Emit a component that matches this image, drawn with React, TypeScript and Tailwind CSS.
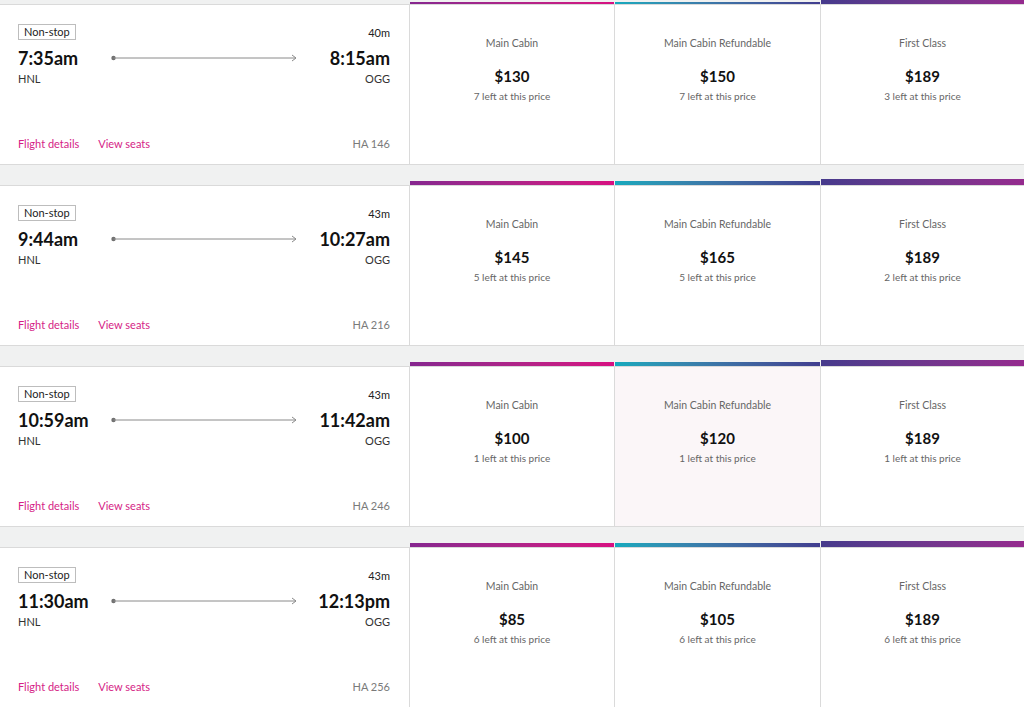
import React from "react";

type Fare = { price: string; left: number };
type Flight = {
  dep: string;
  arr: string;
  dur: string;
  num: string;
  fares: [Fare, Fare, Fare];
  highlight?: number;
};

const flights: Flight[] = [
  { dep: "7:35am", arr: "8:15am", dur: "40m", num: "HA 146", fares: [{ price: "$130", left: 7 }, { price: "$150", left: 7 }, { price: "$189", left: 3 }] },
  { dep: "9:44am", arr: "10:27am", dur: "43m", num: "HA 216", fares: [{ price: "$145", left: 5 }, { price: "$165", left: 5 }, { price: "$189", left: 2 }] },
  { dep: "10:59am", arr: "11:42am", dur: "43m", num: "HA 246", fares: [{ price: "$100", left: 1 }, { price: "$120", left: 1 }, { price: "$189", left: 1 }], highlight: 1 },
  { dep: "11:30am", arr: "12:13pm", dur: "43m", num: "HA 256", fares: [{ price: "$85", left: 6 }, { price: "$105", left: 6 }, { price: "$189", left: 6 }] },
];

const cabins = ["Main Cabin", "Main Cabin Refundable", "First Class"];

function Arrow() {
  return (
    <svg width="186" height="10" viewBox="0 0 186 10" className="block shrink-0">
      <circle cx="2.5" cy="5" r="2.2" fill="#707070" />
      <line x1="2.5" y1="5" x2="185" y2="5" stroke="#8a8a8a" strokeWidth="1" />
      <polyline points="181,2 185,5 181,8" fill="none" stroke="#8a8a8a" strokeWidth="1" />
    </svg>
  );
}

function Bars({ h }: { h: string }) {
  return (
    <div className={`grid grid-cols-[410px_205px_206px_203px] items-end bg-[#f0f1f1] ${h}`}>
      <div />
      <div className="mr-px h-[4px] bg-gradient-to-r from-[#86268f] to-[#d70f81]" />
      <div className="mr-px h-[4px] bg-gradient-to-r from-[#13a9bd] to-[#413d8f]" />
      <div className="h-[6px] bg-gradient-to-r from-[#463a8c] to-[#952a8e]" />
    </div>
  );
}

function Row({ f }: { f: Flight }) {
  return (
    <div className="grid h-[161px] grid-cols-[410px_205px_206px_203px] border-y border-[#dadada] bg-white">
      <div className="flex flex-col border-r border-[#dadada] pl-[18px] pr-[19px] pt-[19px] pb-[13px]">
        <div className="flex items-end justify-between">
          <span className="border border-[#bdbdbd] px-[5px] text-[11px] leading-[14px] text-[#222]">Non-stop</span>
          <span className="text-[11px] leading-[14px] text-[#222]">{f.dur}</span>
        </div>
        <div className="mt-[7px] flex items-center">
          <span className="w-[93px] text-[18px] leading-[22px] font-bold text-[#111]">{f.dep}</span>
          <Arrow />
          <span className="flex-1 text-right text-[18px] leading-[22px] font-bold text-[#111]">{f.arr}</span>
        </div>
        <div className="mt-[3px] flex justify-between text-[11px] leading-[14px] text-[#333]">
          <span>HNL</span>
          <span>OGG</span>
        </div>
        <div className="mt-auto flex items-center text-[11px] leading-[14px]">
          <span className="text-[#d51d86]">Flight details</span>
          <span className="ml-[19px] text-[#d51d86]">View seats</span>
          <span className="ml-auto text-[#7a7a7a]">{f.num}</span>
        </div>
      </div>
      {f.fares.map((fa, i) => (
        <div
          key={i}
          className={`flex flex-col items-center pt-[31px] ${i < 2 ? "border-r border-[#dadada]" : ""} ${f.highlight === i ? "bg-[#fbf6f8]" : "bg-white"}`}
        >
          <span className="text-[10.5px] leading-[14px] text-[#666]">{cabins[i]}</span>
          <span className="mt-[16px] text-[15px] leading-[20px] font-bold text-[#111]">{fa.price}</span>
          <span className="mt-[3px] text-[10px] leading-[14px] text-[#666]">{fa.left} left at this price</span>
        </div>
      ))}
    </div>
  );
}

export default function App() {
  return (
    <div className="h-[707px] w-[1024px] overflow-hidden bg-[#f0f1f1]" style={{ fontFamily: "Lato, 'Open Sans', sans-serif" }}>
      {flights.map((f, i) => (
        <div key={i}>
          <Bars h={i === 0 ? "h-[4px] overflow-hidden" : "h-[20px]"} />
          <Row f={f} />
        </div>
      ))}
    </div>
  );
}
